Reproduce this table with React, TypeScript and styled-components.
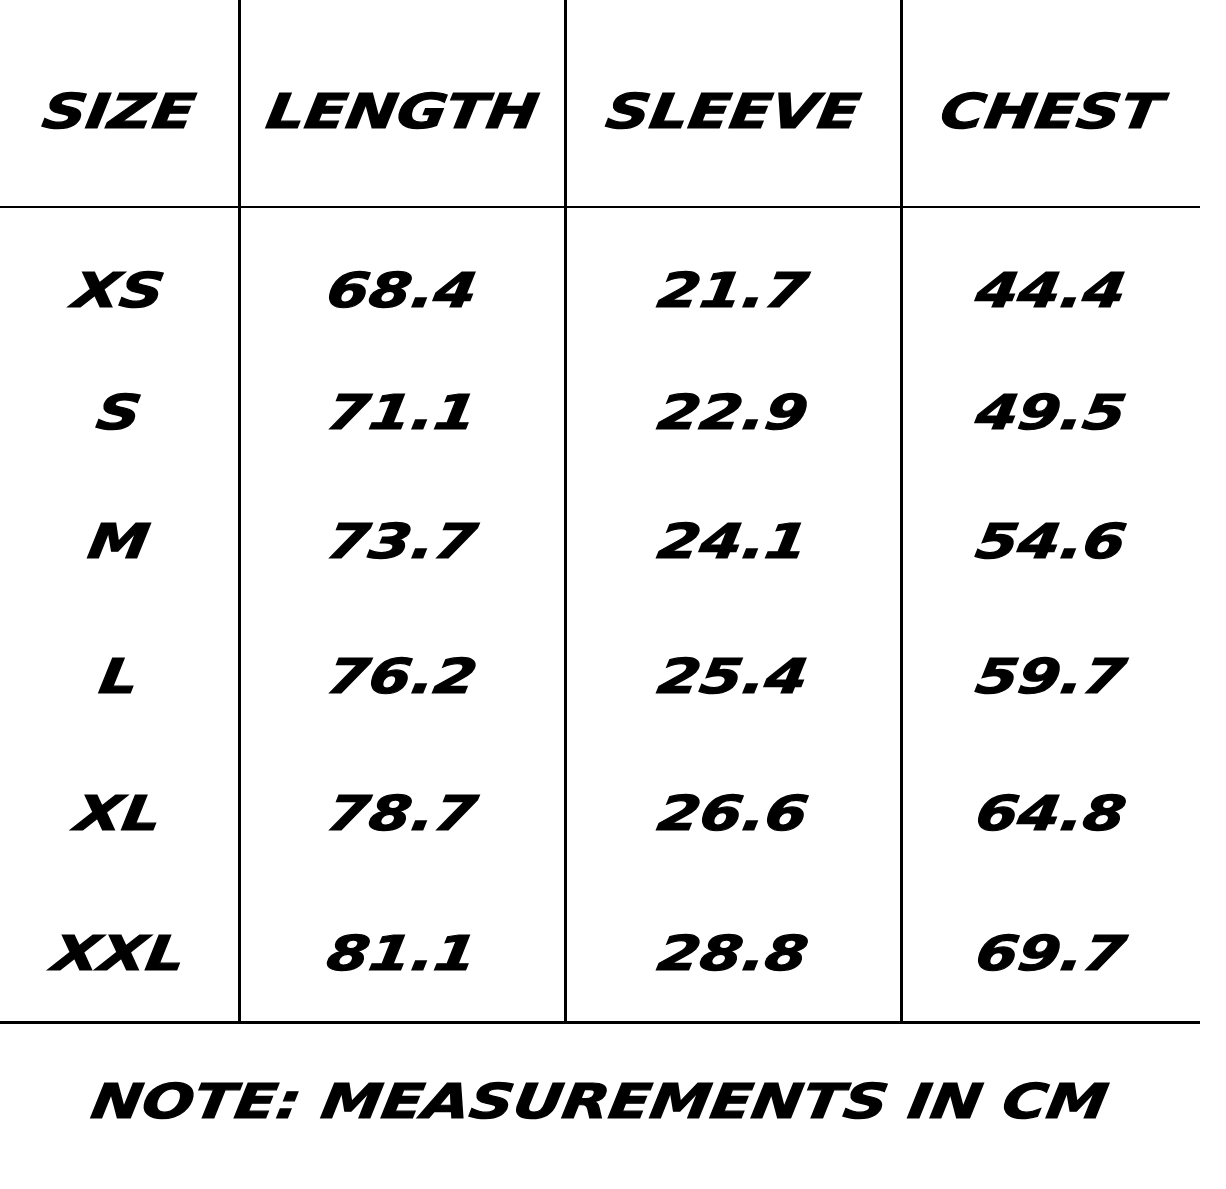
import styled, { createGlobalStyle } from "styled-components";

const GlobalStyle = createGlobalStyle`
  html, body {
    margin: 0;
    padding: 0;
    background: #ffffff;
  }
  body {
    font-family: "DejaVu Sans", "Liberation Sans", sans-serif;
    color: #000;
  }
`;

const Page = styled.div`
  width: 1226px;
  min-height: 1189px;
  background: #ffffff;
`;

const Table = styled.div`
  width: 1200px;
  display: grid;
  grid-template-columns: 241px 326px 336px 297px;
`;

const HeadCell = styled.div<{ $last?: boolean }>`
  box-sizing: border-box;
  height: 208px;
  padding-top: 16px;
  display: flex;
  align-items: center;
  justify-content: center;
  border-bottom: 2px solid #000;
  border-right: ${(p) => (p.$last ? "none" : "3px solid #000")};
`;

const BodyCell = styled.div<{ $h: number; $pad: number; $last?: boolean; $bottom?: boolean }>`
  box-sizing: border-box;
  height: ${(p) => p.$h + (p.$bottom ? 3 : 0)}px;
  padding-top: ${(p) => p.$pad}px;
  display: flex;
  align-items: flex-start;
  justify-content: center;
  border-right: ${(p) => (p.$last ? "none" : "3px solid #000")};
  border-bottom: ${(p) => (p.$bottom ? "3px solid #000" : "none")};
`;

// wide, heavy, slanted display lettering
const Wide = styled.span`
  display: inline-block;
  font-family: "DejaVu Sans", "Liberation Sans", sans-serif;
  font-weight: 700;
  font-style: italic;
  font-size: 48px;
  line-height: 50px;
  text-transform: uppercase;
  white-space: nowrap;
  -webkit-text-stroke: 1.2px #000;
  transform: scaleX(1.26) skewX(-7deg);
  transform-origin: center;
`;

const Note = styled.div`
  width: 1200px;
  margin-top: 52px;
  text-align: center;
`;

const columns = ["Size", "Length", "Sleeve", "Chest"];

const rows = [
  { size: "XS", values: ["68.4", "21.7", "44.4"], h: 143, pad: 57 },
  { size: "S", values: ["71.1", "22.9", "49.5"], h: 129, pad: 36 },
  { size: "M", values: ["73.7", "24.1", "54.6"], h: 135, pad: 36 },
  { size: "L", values: ["76.2", "25.4", "59.7"], h: 137, pad: 36 },
  { size: "XL", values: ["78.7", "26.6", "64.8"], h: 140, pad: 36 },
  { size: "XXL", values: ["81.1", "28.8", "69.7"], h: 129, pad: 36 },
];

export default function App() {
  return (
    <Page>
      <GlobalStyle />
      <Table>
        {columns.map((c, i) => (
          <HeadCell key={c} $last={i === columns.length - 1}>
            <Wide>{c}</Wide>
          </HeadCell>
        ))}
        {rows.map((r, ri) =>
          [r.size, ...r.values].map((v, ci) => (
            <BodyCell
              key={`${r.size}-${ci}`}
              $h={r.h}
              $pad={r.pad}
              $last={ci === 3}
              $bottom={ri === rows.length - 1}
            >
              <Wide>{v}</Wide>
            </BodyCell>
          ))
        )}
      </Table>
      <Note>
        <Wide>Note: Measurements in cm</Wide>
      </Note>
    </Page>
  );
}
